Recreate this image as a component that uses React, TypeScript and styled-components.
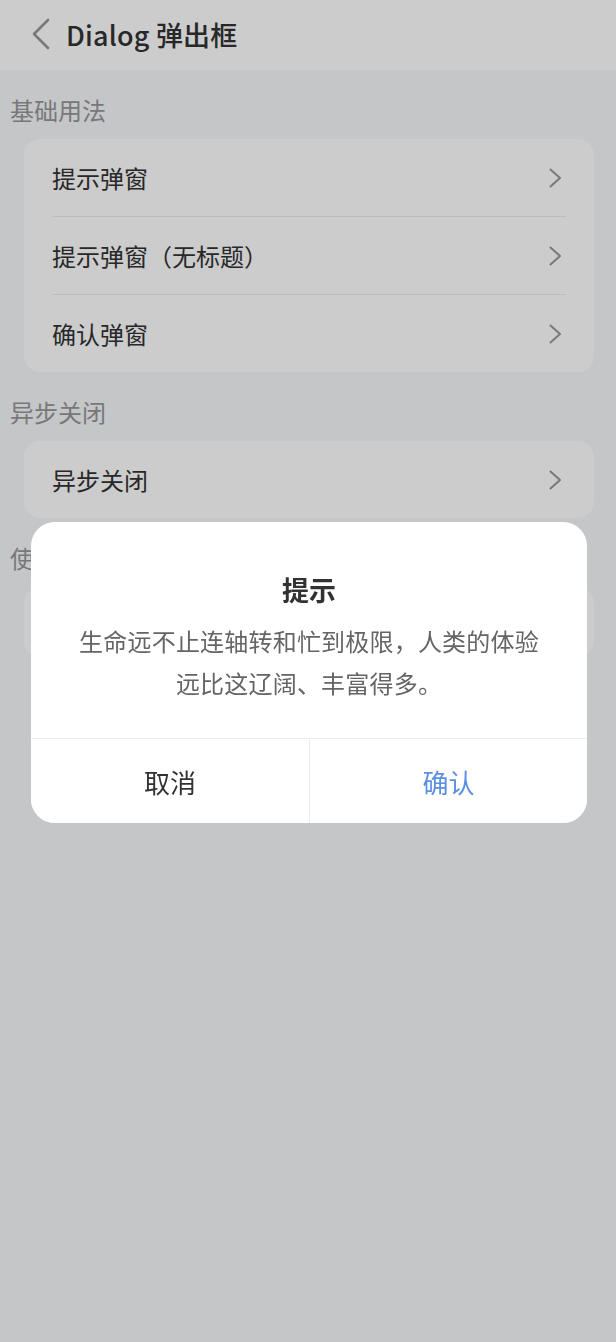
import styled, { createGlobalStyle } from 'styled-components'

const GlobalStyle = createGlobalStyle`
  html, body {
    margin: 0;
    padding: 0;
    background: #f7f8fa;
  }
  body {
    font-family: "Noto Sans CJK SC", "Noto Sans", sans-serif;
    color: #323233;
    -webkit-font-smoothing: antialiased;
  }
`

const sections = [
  { title: '基础用法', items: ['提示弹窗', '提示弹窗（无标题）', '确认弹窗'] },
  { title: '异步关闭', items: ['异步关闭'] },
  { title: '使用 Dialog 组件', items: ['使用 Dialog 组件'], compact: true },
]

function ArrowRight() {
  return (
    <svg width="16" height="20" viewBox="0 0 16 20" fill="none">
      <path d="M3.5 1.5 L13 10 L3.5 18.5" stroke="#969799" strokeWidth="2" strokeLinecap="round" strokeLinejoin="round" />
    </svg>
  )
}

function BackIcon() {
  return (
    <svg width="20" height="32" viewBox="0 0 20 32" fill="none">
      <path d="M17 2 L3 16 L17 30" stroke="#969799" strokeWidth="2.6" strokeLinecap="round" strokeLinejoin="round" />
    </svg>
  )
}

export default function App() {
  return (
    <>
      <GlobalStyle />
      <Page>
        <NavBar>
          <BackIcon />
          <NavTitle>Dialog 弹出框</NavTitle>
        </NavBar>

        {sections.map((section) => (
          <section key={section.title}>
            <SectionTitle>{section.title}</SectionTitle>
            <Card>
              {section.items.map((item) => (
                <Cell key={item} $compact={section.compact}>
                  <span>{item}</span>
                  <ArrowRight />
                </Cell>
              ))}
            </Card>
          </section>
        ))}
      </Page>

      <Overlay />

      <Dialog role="dialog">
        <DialogTitle>提示</DialogTitle>
        <DialogMessage>生命远不止连轴转和忙到极限，人类的体验远比这辽阔、丰富得多。</DialogMessage>
        <DialogFooter>
          <DialogButton>取消</DialogButton>
          <DialogButton $confirm>确认</DialogButton>
        </DialogFooter>
      </Dialog>
    </>
  )
}

const Page = styled.div`
  min-height: 1342px;
  background: #f7f8fa;
`

const NavBar = styled.header`
  display: flex;
  align-items: center;
  gap: 15px;
  height: 70px;
  padding: 0 0 2px 31px;
  box-sizing: border-box;
  background: #ffffff;
`

const NavTitle = styled.h1`
  margin: 0;
  font-size: 27px;
  font-weight: 500;
  color: #323233;
  letter-spacing: 0.2px;
`

const SectionTitle = styled.h2`
  margin: 0;
  padding: 23px 10px 12px;
  font-size: 24px;
  line-height: 34px;
  font-weight: 400;
  color: #969799;
`

const Card = styled.div`
  margin: 0 22px 0 24px;
  padding: 0 28px;
  background: #ffffff;
  border-radius: 16px;
`

const Cell = styled.div<{ $compact?: boolean }>`
  display: flex;
  align-items: center;
  justify-content: space-between;
  height: ${(p) => (p.$compact ? 70 : 77)}px;
  font-size: 24px;
  color: #323233;

  svg {
    margin-right: 3px;
  }

  & + & {
    border-top: 1px solid #ebedf0;
  }
`

const Overlay = styled.div`
  position: fixed;
  inset: 0;
  background: rgba(0, 0, 0, 0.2);
`

const Dialog = styled.div`
  position: fixed;
  top: 522px;
  left: 31px;
  width: 556px;
  background: #ffffff;
  border-radius: 24px;
  overflow: hidden;
`

const DialogTitle = styled.div`
  padding-top: 52px;
  font-size: 27px;
  line-height: 32px;
  font-weight: 600;
  text-align: center;
  color: #323233;
`

const DialogMessage = styled.div`
  padding: 14px 38px 34px;
  font-size: 24px;
  line-height: 42px;
  letter-spacing: 0.2px;
  text-align: center;
  color: #646566;
`

const DialogFooter = styled.div`
  display: grid;
  grid-template-columns: 1fr 1fr;
  border-top: 1px solid #ebedf0;
`

const DialogButton = styled.button<{ $confirm?: boolean }>`
  height: 84px;
  margin: 0;
  padding: 0;
  border: none;
  background: #ffffff;
  font-family: inherit;
  font-size: 26px;
  color: ${(p) => (p.$confirm ? '#5b8fe2' : '#323233')};

  & + & {
    border-left: 1px solid #ebedf0;
  }
`
